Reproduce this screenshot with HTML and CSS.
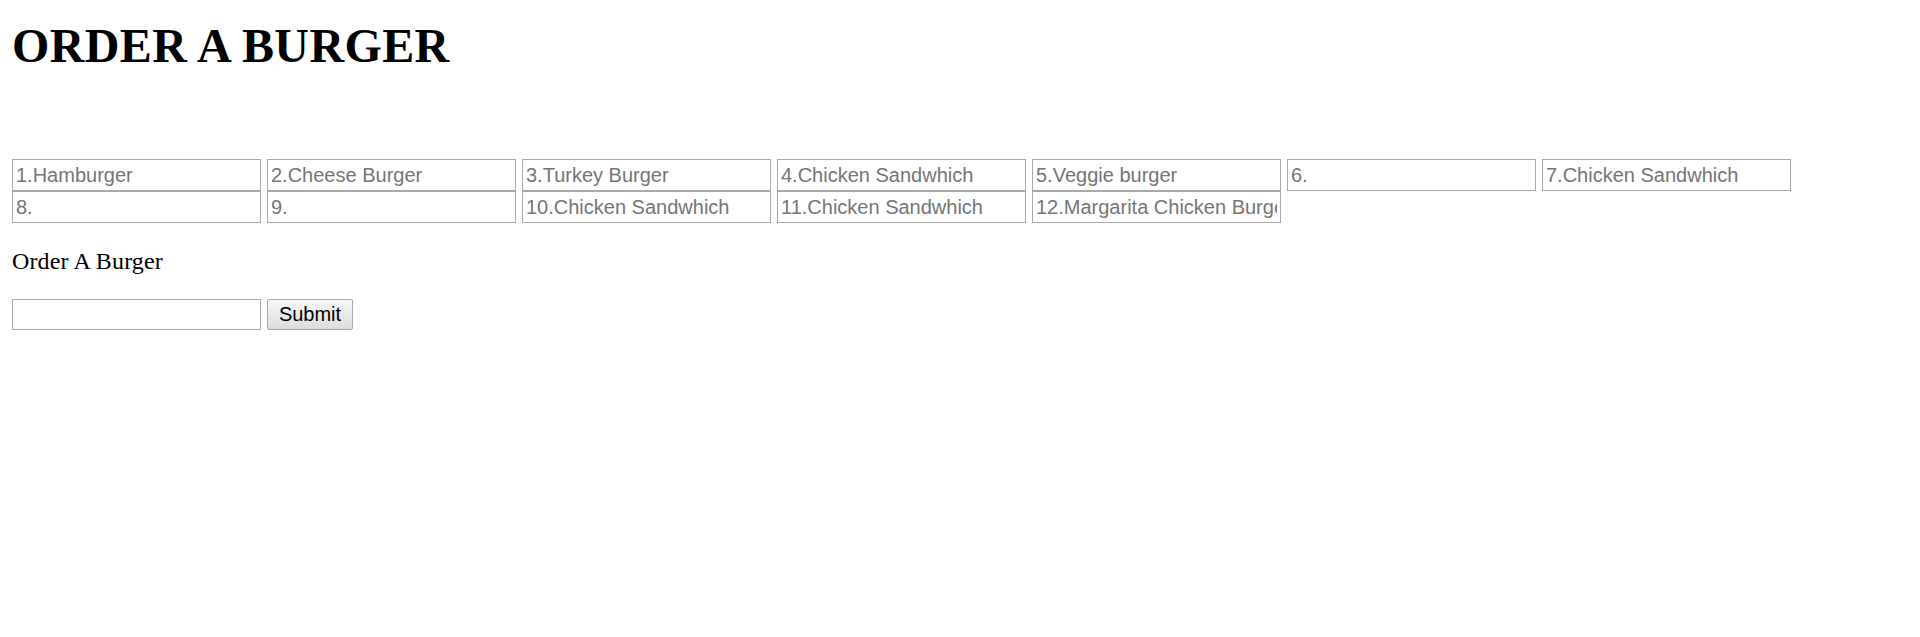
FILE: index.html
```html
<!DOCTYPE html>
<html>
<head>
<meta charset="utf-8">
<title>Order a Burger</title>
<link rel="stylesheet" href="styles.css">
</head>
<body>
<div class="page">
  <h1 class="title">ORDER A BURGER</h1>
  <div class="menu">
    <input class="field" type="text" placeholder="1.Hamburger">
    <input class="field" type="text" placeholder="2.Cheese Burger">
    <input class="field" type="text" placeholder="3.Turkey Burger">
    <input class="field" type="text" placeholder="4.Chicken Sandwhich">
    <input class="field" type="text" placeholder="5.Veggie burger">
    <input class="field" type="text" placeholder="6.">
    <input class="field" type="text" placeholder="7.Chicken Sandwhich">
    <input class="field" type="text" placeholder="8.">
    <input class="field" type="text" placeholder="9.">
    <input class="field" type="text" placeholder="10.Chicken Sandwhich">
    <input class="field" type="text" placeholder="11.Chicken Sandwhich">
    <input class="field" type="text" placeholder="12.Margarita Chicken Burger">
  </div>
  <p class="label">Order A Burger</p>
  <form class="order" onsubmit="return false;">
    <input class="field" type="text">
    <button class="submit" type="submit">Submit</button>
  </form>
</div>
</body>
</html>
```

FILE: styles.css
```css
html, body {
  margin: 0;
  padding: 0;
  background: #ffffff;
}

.page {
  padding: 18px 12px 0 12px;
  font-family: "Liberation Serif", "Times New Roman", serif;
  font-size: 24px;
  color: #000000;
}

.title {
  margin: 0 0 86px 0;
  font-size: 48px;
  font-weight: bold;
  line-height: 55px;
  letter-spacing: 0.4px;
}

.menu {
  display: flex;
  flex-wrap: wrap;
  column-gap: 6px;
  row-gap: 0;
}

.field {
  box-sizing: border-box;
  width: 249px;
  height: 32px;
  margin: 0;
  padding: 0 3px;
  border: 1px solid #a9a9a9;
  border-radius: 0;
  background: #ffffff;
  font-family: "Liberation Sans", Arial, sans-serif;
  font-size: 20px;
  color: #000000;
  outline: none;
}

.field::placeholder {
  color: #757575;
  opacity: 1;
}

.label {
  margin: 24px 0;
  line-height: 28px;
  letter-spacing: 0.15px;
}

.order {
  display: flex;
  column-gap: 6px;
  margin: 0;
}

.order .field {
  height: 31px;
}

.submit {
  box-sizing: border-box;
  width: 86px;
  height: 31px;
  margin: 0;
  padding: 0 6px;
  border: 1px solid #a9a9a9;
  border-radius: 2px;
  background: linear-gradient(#f8f8f8, #dddddd);
  font-family: "Liberation Sans", Arial, sans-serif;
  font-size: 20px;
  color: #000000;
}
```
